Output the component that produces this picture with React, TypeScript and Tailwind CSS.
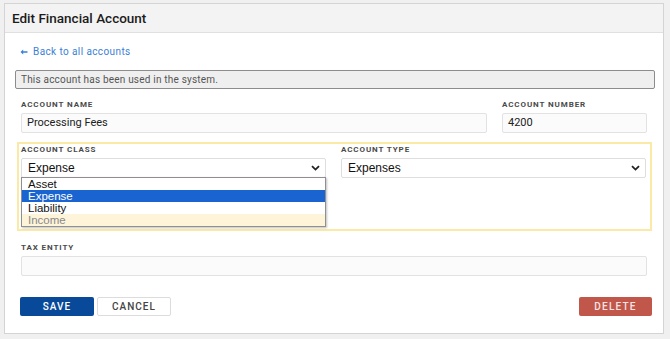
import React from "react";

function Chevron() {
  return (
    <svg width="9" height="6" viewBox="0 0 9 6" className="shrink-0">
      <path d="M1 1.2 L4.5 4.6 L8 1.2" fill="none" stroke="#222" strokeWidth="1.8" />
    </svg>
  );
}

function BackArrow() {
  return (
    <svg width="8" height="6" viewBox="0 0 8 6" className="shrink-0">
      <path d="M0.5 3 L3.2 0.5 L3.2 2.2 L7.5 2.2 L7.5 3.8 L3.2 3.8 L3.2 5.5 Z" fill="#3b7fd6" />
    </svg>
  );
}

function Label({ children }: { children: React.ReactNode }) {
  return (
    <div className="text-[8px] font-bold tracking-[0.9px] text-[#4a4a4a] leading-[11px] mb-[3px] uppercase">
      {children}
    </div>
  );
}

function TextBox({ value }: { value?: string }) {
  return (
    <div className="h-[20px] border border-[#e2e2e2] bg-[#fbfbfb] rounded-[2px] px-[5px] flex items-center text-[11px] text-[#222]">
      {value}
    </div>
  );
}

function SelectBox({ value }: { value: string }) {
  return (
    <div className="h-[20px] border border-[#dedede] bg-white rounded-[2px] pl-[6px] pr-[5px] flex items-center justify-between text-[12px] text-[#111] font-['Liberation_Sans',Arial,sans-serif]">
      <span>{value}</span>
      <Chevron />
    </div>
  );
}

export default function App() {
  const options = ["Asset", "Expense", "Liability", "Income"];

  return (
    <div className="w-[670px] h-[339px] bg-[#f0f0f0] pt-[3px] pl-[4px] font-['Roboto',sans-serif]">
      <div className="w-[660px] h-[331px] border border-[#d4d4d4] bg-white flex flex-col">
        <div className="h-[29px] bg-[#f3f3f3] border-b border-[#e0e0e0] px-[7px] flex items-center">
          <h1 className="text-[13.5px] font-medium text-[#1c1c1c]">Edit Financial Account</h1>
        </div>

        <div className="px-[10px] pr-[8px]">
          <div className="pt-[1px] pl-[5px] h-[36px] flex items-center gap-[5px] text-[10px] text-[#3b7fd6] tracking-[0.4px]">
            <BackArrow />
            <span>Back to all accounts</span>
          </div>

          <div className="mt-[1px] h-[19px] border border-[#8c8c8c] bg-[#efefef] rounded-[2px] px-[5px] flex items-center text-[10px] text-[#555] tracking-[0.2px]">
            This account has been used in the system.
          </div>

          <div className="mt-[10px] px-[6px] pr-[8px] grid grid-cols-[1fr_145px] gap-[15px]">
            <div>
              <Label>Account Name</Label>
              <TextBox value="Processing Fees" />
            </div>
            <div>
              <Label>Account Number</Label>
              <TextBox value="4200" />
            </div>
          </div>

          <div className="mt-[9px] mx-[2px] mr-[3px] h-[89px] border-2 border-[#fbe9a6] px-[2px] pr-[4px] pt-0 grid grid-cols-2 gap-[15px] items-start">
            <div className="relative">
              <Label>Account Class</Label>
              <SelectBox value="Expense" />
              <div className="absolute left-0 right-0 top-[33px] border border-[#8f8f8f] bg-white shadow-[1px_1px_2px_rgba(0,0,0,0.25)] text-[11.5px] leading-[12px] font-['Liberation_Sans',Arial,sans-serif]">
                {options.map((o) => (
                  <div
                    key={o}
                    className={
                      o === "Expense"
                        ? "h-[12px] px-[6px] bg-[#1a64d1] text-white"
                        : o === "Income"
                        ? "h-[12px] px-[6px] bg-[#fdf4da] text-[#8a8a8a]"
                        : "h-[12px] px-[6px] text-[#111]"
                    }
                  >
                    {o}
                  </div>
                ))}
              </div>
            </div>
            <div>
              <Label>Account Type</Label>
              <SelectBox value="Expenses" />
            </div>
          </div>

          <div className="mt-[11px] px-[6px] pr-[8px]">
            <Label>Tax Entity</Label>
            <TextBox />
          </div>

          <div className="mt-[21px] px-[5px] pr-[3px] flex items-center">
            <button className="w-[74px] h-[19px] bg-[#08499a] rounded-[2px] text-white text-[10px] font-medium tracking-[1px]">
              SAVE
            </button>
            <button className="ml-[3px] w-[74px] h-[19px] bg-white border border-[#dcdcdc] rounded-[2px] text-[#444] text-[10px] font-medium tracking-[1px]">
              CANCEL
            </button>
            <div className="flex-1" />
            <button className="w-[73px] h-[19px] bg-[#c0574a] rounded-[2px] text-[#fbe3e3] text-[10px] font-medium tracking-[1.2px]">
              DELETE
            </button>
          </div>
        </div>
      </div>
    </div>
  );
}
